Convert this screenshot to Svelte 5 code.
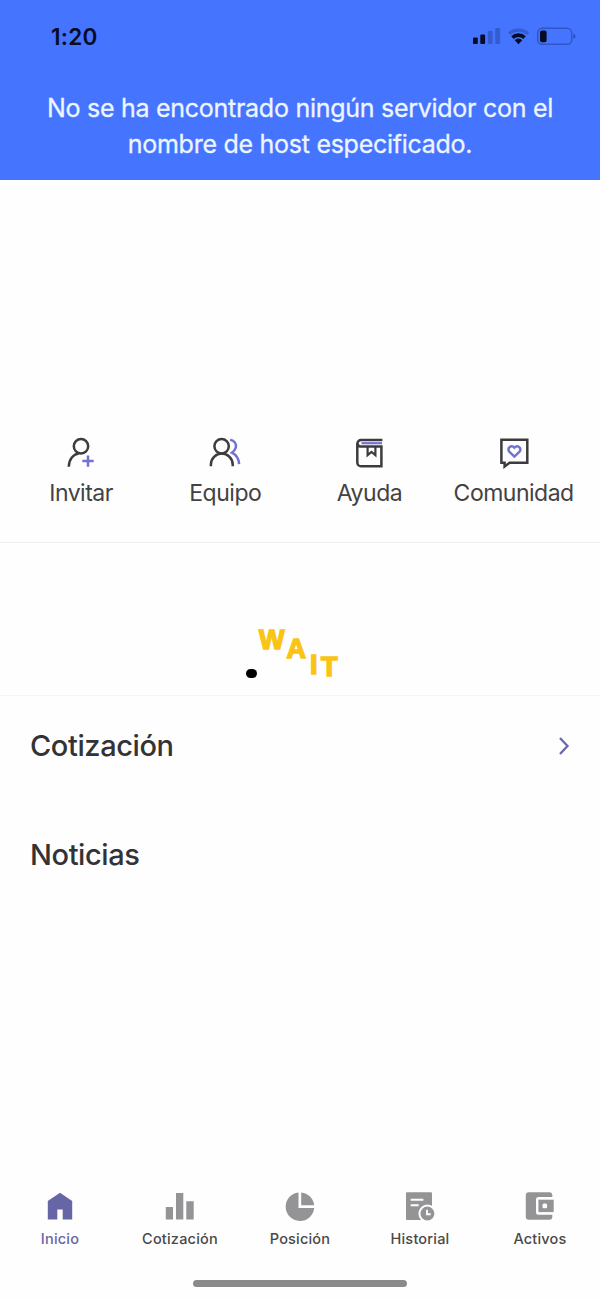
<script>
	let active = "Inicio"

	const actions = ["Invitar", "Equipo", "Ayuda", "Comunidad"]
	const tabs = ["Inicio", "Cotización", "Posición", "Historial", "Activos"]
</script>

<div class="phone">

	<header>
		<div class="status">
			<span class="time">1:20</span>
			<svg width="104" height="22" viewBox="0 0 104 22">
				<!-- signal -->
				<rect x="1" y="12.5" width="4.8" height="6.5" rx="1" />
				<rect x="8.3" y="9.5" width="4.8" height="9.5" rx="1" />
				<rect class="dim" x="15.8" y="6" width="4.8" height="13" rx="1" />
				<rect class="dim" x="23.3" y="3" width="4.8" height="16" rx="1" />
				<!-- wifi -->
				<path class="dim" d="M36 7.6a15.3 15.3 0 0 1 21 0l-2.2 2.4a12 12 0 0 0-16.6 0z" />
				<path d="M39.2 11.2a10.4 10.4 0 0 1 14.6 0l-2.5 2.8a7 7 0 0 0-9.600 0z" />
				<path d="M42.700 15.200a5.300 5.300 0 0 1 7.600 0L46.500 19.300z" />
				<!-- battery -->
				<rect class="outline" x="65.7" y="3.200" width="34" height="16" rx="4.500" />
				<rect x="68" y="5.500" width="6.600" height="11.800" rx="2" />
				<path class="nub" d="M101.300 8.600q2.200.9 2.200 2.700t-2.200 2.700z" />
			</svg>
		</div>
		<p>No se ha encontrado ningún servidor con el<br>nombre de host especificado.</p>
	</header>

	<section class="actions">
		{#each actions as name}
			<div class="action">
				<svg width="36" height="34" viewBox="0 0 36 34">
					{#if name === "Invitar"}
						<circle cx="18" cy="11.300" r="7.200" />
						<path d="M16 18.300C10 19.500 5.900 24.500 5.800 31.800" />
						<path class="accent" d="M25 20.400v11.400M19.300 26.100h11.400" />
					{:else if name === "Equipo"}
						<circle cx="14.600" cy="11.300" r="7.200" />
						<path d="M3.900 31.300v-1.800a10.800 10.800 0 0 1 21.800 0v1.800" />
						<path class="accent" d="M23.200 4.800c4.400.8 6.500 4.200 5.600 7.700-.5 2-1.800 3.700-3.900 5.200 4.200 2.100 6.900 5.600 7.200 11.400" />
					{:else if name === "Ayuda"}
						<path d="M31.400 5H10.100a3.800 3.800 0 0 0-3.800 3.800v18.700a3.800 3.800 0 0 0 3.800 3.800h20.300V11.500H10.100a3.300 3.300 0 0 1-3.600-2.700" />
						<path class="accent thin" d="M10.500 8.200h20.500" />
						<path class="mark" d="M16.600 12v8.100l3.900-3.100 3.900 3.100V12" />
					{:else}
						<path d="M5.400 4.700h25.900v23H13.600l-5 3.700v-3.700H5.400z" />
						<path class="accent" d="M18.400 21.600l-4.900-4.700c-3.300-3.500 1.700-7.600 4.900-4.200 3.200-3.400 8.200.7 4.900 4.200z" />
					{/if}
				</svg>
				<span>{name}</span>
			</div>
		{/each}
	</section>

	<section class="loading">
		<i class="dot"></i>
		<span>W</span>
		<span class="a">A</span>
		<span class="i">I</span>
		<span class="t">T</span>
	</section>

	<main>
		<div class="row">
			<h2>Cotización</h2>
			<svg width="14" height="24" viewBox="0 0 14 24">
				<path d="M3 4l7.500 8L3 20" />
			</svg>
		</div>
		<div class="row news">
			<h2>Noticias</h2>
		</div>
	</main>

	<nav>
		{#each tabs as tab}
			<div class="tab" class:active={tab === active}>
				<svg width="32" height="32" viewBox="0 0 32 32">
					{#if tab === "Inicio"}
						<path d="M16 2.700L28.200 11v18.400h-9.500V19.600h-5.400v9.800H3.800V11z" />
					{:else if tab === "Cotización"}
						<path d="M1.800 17H9v12.500H1.800zM12 3.100h7.300v26.400H12zM22.300 11.200h7.400v18.300h-7.400z" />
					{:else if tab === "Posición"}
						<path d="M14.500 2.500A14.300 14.300 0 1 0 30.200 18.100H14.500z" />
						<path d="M17.200 2.500a14.300 14.300 0 0 1 13 12.800h-13z" />
					{:else if tab === "Historial"}
						<rect x="2" y="2.200" width="26" height="27.800" rx="1" />
						<path class="cut" d="M6.700 9.700h12.700M6.700 15.200h8" />
						<circle class="ring" cx="23.400" cy="23.600" r="8" />
						<path class="cut" d="M23 19.800v4.400h3.700" />
					{:else}
						<rect x="1.800" y="2.300" width="26.500" height="27.500" rx="3" />
						<path class="hole" d="M32 7H14.500a2.500 2.500 0 0 0-2.500 2.500v12.800a2.500 2.500 0 0 0 2.500 2.500H32z" />
						<path d="M14.400 9.700h15.300v12.400H14.400z" />
						<rect class="hole" x="18.500" y="13.600" width="4.600" height="4.600" rx="1.500" />
					{/if}
				</svg>
				<span>{tab}</span>
			</div>
		{/each}
	</nav>

	<footer><div class="bar"></div></footer>

</div>

<style>
	:global(body) {
		margin: 0;
		background: #fff;
	}

	* {
		box-sizing: border-box;
	}

	.phone {
		display: flex;
		flex-direction: column;
		width: 600px;
		height: 1299px;
		overflow: hidden;
		background: #fefefe;
		font-family: Inter, "Liberation Sans", sans-serif;
		color: #333336;
	}

	svg {
		display: block;
	}

	header {
		height: 180px;
		background: #4574ff;
	}

	.status {
		display: flex;
		justify-content: space-between;
		padding: 25px 24px 0 51px;
		height: 90px;
	}

	.time {
		font-size: 22.5px;
		line-height: 23px;
		font-weight: 600;
		letter-spacing: 0.3px;
		color: #050c24;
	}

	.status svg {
		fill: #050c24;
	}

	.status .dim {
		fill: #345bd0;
	}

	.status .nub {
		fill: #2c4fb8;
	}

	.status .outline {
		fill: none;
		stroke: #3157c6;
		stroke-width: 1.5;
	}

	header p {
		margin: 0;
		text-align: center;
		font-size: 25px;
		line-height: 36px;
		letter-spacing: -0.27px;
		-webkit-text-stroke: 0.3px #edf5ff;
		color: #edf5ff;
	}

	.actions {
		display: grid;
		grid-template-columns: repeat(4, 144.2px);
		height: 363px;
		padding: 255px 0 0 9px;
		border-bottom: 1px solid #efeff0;
	}

	.action {
		display: flex;
		flex-direction: column;
		align-items: center;
		font-size: 23px;
		line-height: 30px;
		letter-spacing: -0.5px;
		color: #424245;
	}

	.action svg {
		margin-bottom: 9px;
		fill: none;
		stroke: #3c3c3e;
		stroke-width: 2.5;
	}

	.action .accent {
		stroke: #7272d2;
	}

	.action .thin,
	.action .mark {
		stroke-width: 2.2;
	}

	.loading {
		display: flex;
		align-items: flex-start;
		height: 153px;
		padding: 80px 0 0 246px;
		border-bottom: 1px solid #f4f4f5;
		font-family: "Liberation Sans", sans-serif;
		font-size: 27px;
		font-weight: 700;
		line-height: 34px;
		-webkit-text-stroke: 1.5px #f9c416;
		color: #f9c416;
	}

	.dot {
		width: 11px;
		height: 9px;
		margin: 46px 2px 0 0;
		border-radius: 5px;
		background: #000;
	}

	.a {
		margin: 9px 0 0 2px;
	}

	.i {
		margin: 25px 0 0 4px;
	}

	.t {
		margin: 27px 0 0 3.5px;
	}

	main {
		flex: 1;
		padding: 30px 29px 0 30px;
	}

	.row {
		display: flex;
		justify-content: space-between;
		align-items: center;
		height: 40px;
	}

	.row svg {
		fill: none;
		stroke: #6a67ad;
		stroke-width: 2.3;
	}

	.news {
		margin-top: 69px;
	}

	h2 {
		margin: 0;
		padding-bottom: 1px;
		font-size: 29px;
		font-weight: 500;
		letter-spacing: -0.4px;
	}

	nav {
		display: grid;
		grid-template-columns: repeat(5, 120px);
		height: 78px;
	}

	.tab {
		display: flex;
		flex-direction: column;
		align-items: center;
		font-size: 14.5px;
		line-height: 18px;
		font-weight: 500;
		letter-spacing: 0.2px;
		color: #48484a;
	}

	.tab svg {
		margin-bottom: 8px;
		fill: #949496;
	}

	.tab .cut {
		fill: none;
		stroke: #fefefe;
		stroke-width: 1.9;
	}

	.tab .hole {
		fill: #fefefe;
	}

	.tab .ring {
		stroke: #fefefe;
		stroke-width: 2;
	}

	.active {
		color: #6665a5;
	}

	.active svg {
		fill: #6665a5;
	}

	footer {
		display: flex;
		justify-content: center;
		height: 31px;
		padding-top: 12px;
	}

	.bar {
		width: 214px;
		height: 7px;
		border-radius: 4px;
		background: #8a8a8a;
	}
</style>
